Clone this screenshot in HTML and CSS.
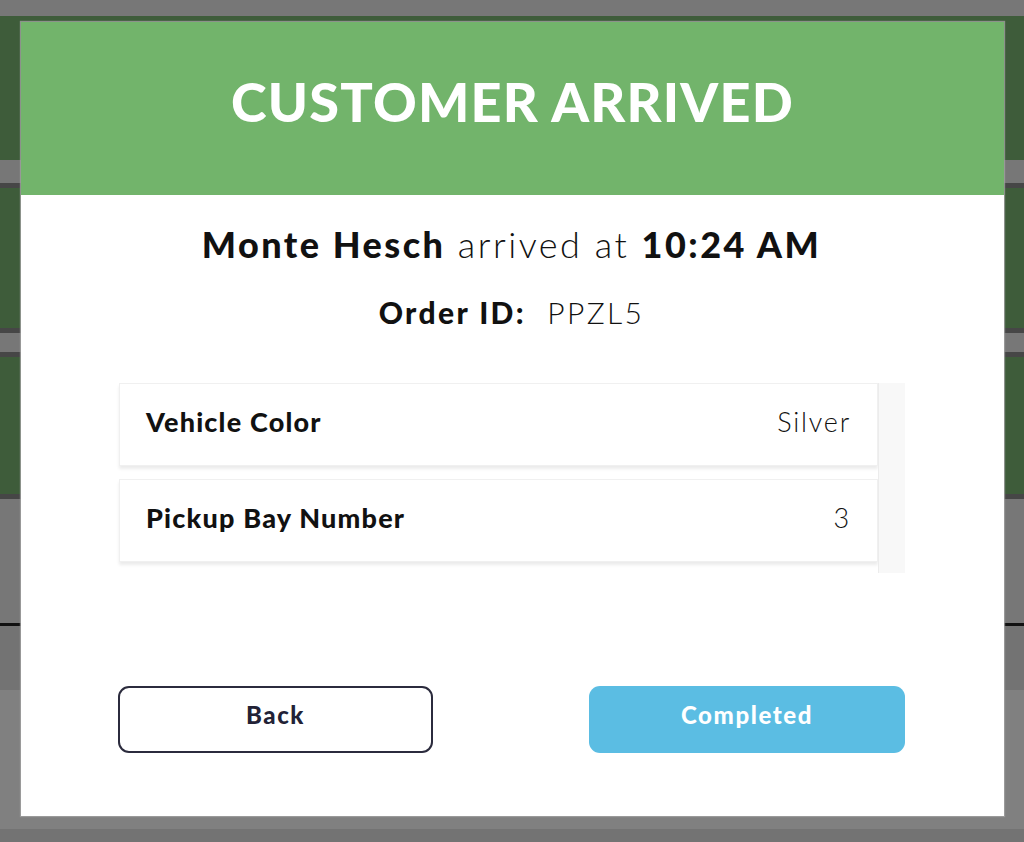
FILE: index.html
```html
<!DOCTYPE html>
<html>
<head>
<meta charset="utf-8">
<link rel="stylesheet" href="styles.css">
</head>
<body>
<div class="page">
  <div class="s s-gray h16"></div>
  <div class="s s-green h144"></div>
  <div class="s s-gray h23"></div>
  <div class="s s-dark h5"></div>
  <div class="s s-green h140"></div>
  <div class="s s-dark h5"></div>
  <div class="s s-gray h19"></div>
  <div class="s s-dark h5"></div>
  <div class="s s-green h137"></div>
  <div class="s s-dark h5"></div>
  <div class="s s-gray h124"></div>
  <div class="s s-black h3"></div>
  <div class="s s-gray2 h64"></div>
  <div class="s s-light h139"></div>
  <div class="s s-gray2 h13"></div>
</div>
<div class="modal">
  <div class="modal-header">
    <h1 class="title">CUSTOMER ARRIVED</h1>
  </div>
  <div class="modal-body">
    <p class="arrival"><b>Monte Hesch</b> arrived at <b>10:24 AM</b></p>
    <p class="order"><b>Order ID:</b>&nbsp; PPZL5</p>
    <div class="list">
      <div class="cards">
        <div class="card"><span class="label">Vehicle Color</span><span class="value">Silver</span></div>
        <div class="card"><span class="label">Pickup Bay Number</span><span class="value">3</span></div>
      </div>
      <div class="track"></div>
    </div>
    <div class="actions">
      <button class="btn btn-back">Back</button>
      <button class="btn btn-done">Completed</button>
    </div>
  </div>
</div>
</body>
</html>
```

FILE: styles.css
```css
html, body {
  margin: 0;
  padding: 0;
  height: 842px;
  overflow: hidden;
}
body {
  font-family: Lato, "Noto Sans", sans-serif;
  color: #111;
  position: relative;
}
.page { display: flex; flex-direction: column; }
.s { width: 100%; }
.s-gray { background: #777777; }
.s-gray2 { background: #737373; }
.s-light { background: #808080; }
.s-green { background: #3e5c3a; }
.s-dark { background: #464646; }
.s-black { background: #111111; }
.h3 { height: 3px; } .h5 { height: 5px; } .h13 { height: 13px; } .h16 { height: 16px; }
.h19 { height: 19px; } .h23 { height: 23px; } .h64 { height: 64px; } .h124 { height: 124px; }
.h137 { height: 137px; } .h139 { height: 139px; } .h140 { height: 140px; } .h144 { height: 144px; }

.modal {
  position: absolute;
  left: 21px;
  top: 22px;
  width: 983px;
  height: 794px;
  background: #fff;
  box-shadow: 0 0 1px 1px rgba(160,160,160,0.8);
  display: flex;
  flex-direction: column;
}
.modal-header {
  height: 173px;
  box-sizing: border-box;
  padding-bottom: 14px;
  background: #72b46b;
  display: flex;
  align-items: center;
  justify-content: center;
}
.title {
  margin: 0;
  color: #fff;
  font-size: 54px;
  line-height: 60px;
  font-weight: 900;
  letter-spacing: 1.2px;
}
.modal-body {
  flex: 1;
  display: flex;
  flex-direction: column;
  padding: 0 99px 63px 97px;
}
.arrival {
  margin: 28px 0 0;
  text-align: center;
  font-size: 36px;
  font-weight: 300;
  line-height: 42px;
  letter-spacing: 2.5px;
}
.arrival b, .order b { font-weight: 900; }
.order {
  margin: 30px 0 0;
  text-align: center;
  font-size: 30px;
  font-weight: 300;
  line-height: 34px;
  letter-spacing: 2.4px;
}
.list {
  margin-top: 54px;
  margin-left: 1px;
  height: 190px;
  display: flex;
}
.cards {
  flex: 1;
  display: flex;
  flex-direction: column;
  gap: 13px;
}
.card {
  height: 83px;
  box-sizing: border-box;
  border: 1px solid #f0f0f0;
  box-shadow: 0 3px 3px rgba(0,0,0,0.08);
  display: flex;
  align-items: center;
  justify-content: space-between;
  padding: 0 26px 6px;
  font-size: 27px;
  letter-spacing: 1.2px;
}
.label { font-weight: 900; }
.value { font-weight: 300; letter-spacing: 1.8px; }
.track {
  width: 26px;
  background: #f8f8f8;
  border-left: 1px solid #ececec;
}
.actions {
  margin-top: auto;
  display: flex;
  justify-content: space-between;
}
.btn {
  width: 315px;
  height: 67px;
  border-radius: 11px;
  padding: 0 0 10px;
  font-family: Lato, "Noto Sans", sans-serif;
  font-size: 24px;
  font-weight: 900;
  letter-spacing: 1.6px;
  cursor: pointer;
}
.btn-back {
  background: #fff;
  border: 2px solid #2b2b3d;
  color: #222236;
}
.btn-done {
  background: #5bbde3;
  border: none;
  color: #fff;
  width: 316px;
}
```
